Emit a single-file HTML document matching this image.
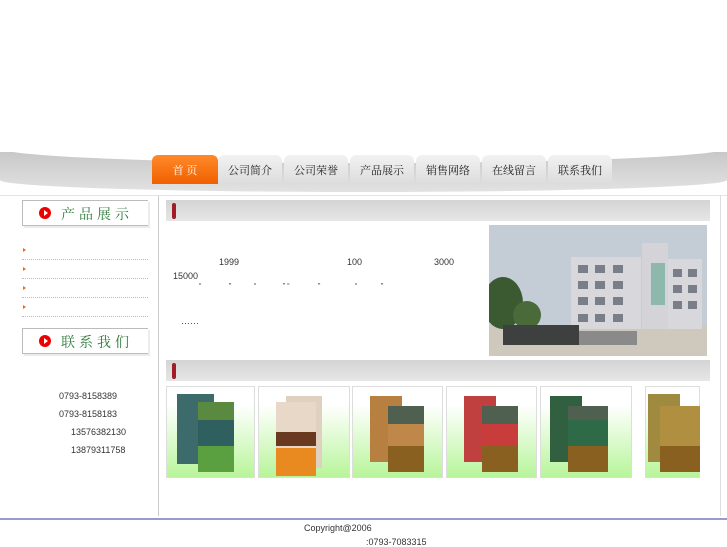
<!DOCTYPE html>
<html><head><meta charset="utf-8"><style>
*{margin:0;padding:0;box-sizing:border-box}
body{width:727px;height:545px;overflow:hidden;background:#fff;font-family:"Liberation Sans","Noto Sans CJK SC",sans-serif;position:relative}
.a{position:absolute}
.tab{position:absolute;top:155px;height:29px;width:64px;background:linear-gradient(#f2f2f2,#dcdcdc);border-radius:6px 6px 0 0;font:11px "Noto Serif CJK SC","Noto Sans CJK SC",serif;color:#222;text-align:center;line-height:31px}
.bar{position:absolute;left:166px;width:544px;height:21px;background:linear-gradient(#d4d4d4,#e6e6e6)}
.bar i{position:absolute;left:6px;top:3px;width:4px;height:16px;background:#a01c2a;border-radius:2px}
.sh{position:absolute;left:22px;width:126px;height:26px;border:1px solid #bbb;border-right:none;background:#fff;box-shadow:2px 2px 0 #ececec}
.sh b{position:absolute;left:16px;top:6px;width:12px;height:12px;border-radius:50%;background:#e00}
.sh b:after{content:"";position:absolute;left:5px;top:3px;border-left:4px solid #fff;border-top:3px solid transparent;border-bottom:3px solid transparent}
.sh span{position:absolute;left:38px;top:3px;font:14px "Noto Serif CJK SC","Noto Sans CJK SC",serif;color:#2d7a3a;letter-spacing:4px}
.dl{position:absolute;left:22px;width:126px;border-top:1px dotted #bbb}
.bu{position:absolute;left:23px;border-left:3px solid #f60;border-top:2px solid transparent;border-bottom:2px solid transparent}
.t{position:absolute;font-size:9px;color:#333}
.cell{position:absolute;top:386px;height:92px;border:1px solid #ddd;background:linear-gradient(#fff 20%,#b8f59a)}
</style></head><body>
<div class="a" style="left:0;top:152px;width:727px;height:40px;background:linear-gradient(#c8c8c8,#e2e2e2);border-radius:0 0 50% 50%/0 0 30% 30%"></div>
<div class="a" style="left:0;top:145px;width:727px;height:18px;background:#fff;border-radius:0 0 60% 60%/0 0 100% 100%"></div>
<div class="tab" style="left:152px;width:66px;background:linear-gradient(#ff8a2a,#f06000);color:#fff">首 页</div>
<div class="tab" style="left:218px">公司简介</div>
<div class="tab" style="left:284px">公司荣誉</div>
<div class="tab" style="left:350px">产品展示</div>
<div class="tab" style="left:416px">销售网络</div>
<div class="tab" style="left:482px">在线留言</div>
<div class="tab" style="left:548px">联系我们</div>
<div class="a" style="left:0;top:195px;width:727px;border-top:1px solid #e4e4e4"></div>
<div class="a" style="left:158px;top:196px;height:320px;border-left:1px solid #ccc"></div>
<div class="a" style="left:720px;top:196px;height:320px;border-left:1px solid #ddd"></div>
<div class="sh" style="top:200px"><b></b><span>产品展示</span></div>
<div class="bu" style="top:248px"></div><div class="dl" style="top:259px"></div>
<div class="bu" style="top:267px"></div><div class="dl" style="top:278px"></div>
<div class="bu" style="top:286px"></div><div class="dl" style="top:297px"></div>
<div class="bu" style="top:305px"></div><div class="dl" style="top:316px"></div>
<div class="sh" style="top:328px"><b></b><span>联系我们</span></div>
<div class="t" style="left:59px;top:391px">0793-8158389</div>
<div class="t" style="left:59px;top:409px">0793-8158183</div>
<div class="t" style="left:71px;top:427px">13576382130</div>
<div class="t" style="left:71px;top:445px">13879311758</div>
<div class="bar" style="top:200px"><i></i></div>
<div class="t" style="left:219px;top:257px">1999</div>
<div class="t" style="left:347px;top:257px">100</div>
<div class="t" style="left:434px;top:257px">3000</div>
<div class="t" style="left:173px;top:271px">15000</div>
<div class="t" style="left:199px;top:283px;font-size:7px">“</div>
<div class="t" style="left:229px;top:283px;font-size:7px">”</div>
<div class="t" style="left:254px;top:283px;font-size:7px">“</div>
<div class="t" style="left:283px;top:283px;font-size:7px">” “</div>
<div class="t" style="left:318px;top:283px;font-size:7px">”</div>
<div class="t" style="left:355px;top:283px;font-size:7px">“</div>
<div class="t" style="left:381px;top:283px;font-size:7px">”</div>
<div class="t" style="left:181px;top:316px">……</div>
<svg class="a" style="left:489px;top:225px" width="218" height="131">
<rect width="218" height="131" fill="#c4ccd6"/>
<rect y="100" width="218" height="31" fill="#cfc9bd"/>
<rect x="82" y="32" width="70" height="72" fill="#d8d8dc"/>
<rect x="153" y="18" width="26" height="86" fill="#d4d4d8"/><rect x="162" y="38" width="14" height="42" fill="#8fb8ac"/>
<rect x="179" y="34" width="34" height="70" fill="#d8d8dc"/>
<g fill="#7a7e88"><rect x="89" y="40" width="10" height="8"/><rect x="106" y="40" width="10" height="8"/><rect x="124" y="40" width="10" height="8"/><rect x="89" y="56" width="10" height="8"/><rect x="106" y="56" width="10" height="8"/><rect x="124" y="56" width="10" height="8"/><rect x="89" y="72" width="10" height="8"/><rect x="106" y="72" width="10" height="8"/><rect x="124" y="72" width="10" height="8"/><rect x="89" y="89" width="10" height="8"/><rect x="106" y="89" width="10" height="8"/><rect x="124" y="89" width="10" height="8"/><rect x="184" y="44" width="9" height="8"/><rect x="199" y="44" width="9" height="8"/><rect x="184" y="60" width="9" height="8"/><rect x="199" y="60" width="9" height="8"/><rect x="184" y="76" width="9" height="8"/><rect x="199" y="76" width="9" height="8"/></g>
<ellipse cx="14" cy="78" rx="20" ry="26" fill="#3c5a32"/><ellipse cx="38" cy="90" rx="14" ry="14" fill="#4a6a3a"/>
<rect x="14" y="100" width="76" height="20" fill="#3e4040"/><rect x="90" y="106" width="58" height="14" fill="#8a8a8a"/>
</svg>
<div class="bar" style="top:360px"><i></i></div>
<div class="cell" style="left:166px;width:89px"></div>
<div class="cell" style="left:258px;width:92px"></div>
<div class="cell" style="left:352px;width:91px"></div>
<div class="cell" style="left:446px;width:91px"></div>
<div class="cell" style="left:540px;width:92px"></div>
<div class="cell" style="left:645px;width:55px"></div>
<svg class="a" style="left:166px;top:386px" width="540" height="92">
<g><rect x="11" y="8" width="37" height="70" fill="#3d6a6a"/><rect x="32" y="16" width="36" height="70" fill="#2f5f5f"/><rect x="32" y="16" width="36" height="18" fill="#5a8a40"/><rect x="32" y="60" width="36" height="26" fill="#5aa040"/></g>
<g><rect x="120" y="10" width="36" height="72" fill="#e0d0c0"/><rect x="110" y="16" width="40" height="74" fill="#e8d8c8"/><rect x="110" y="46" width="40" height="14" fill="#6a3a20"/><rect x="110" y="62" width="40" height="28" fill="#e88a20"/></g>
<g><rect x="204" y="10" width="32" height="66" fill="#b88040"/><rect x="222" y="20" width="36" height="66" fill="#c08848"/><rect x="222" y="20" width="36" height="18" fill="#506050"/><rect x="222" y="60" width="36" height="26" fill="#8a6020"/></g>
<g><rect x="298" y="10" width="32" height="66" fill="#c04040"/><rect x="316" y="20" width="36" height="66" fill="#c83c3c"/><rect x="316" y="20" width="36" height="18" fill="#506050"/><rect x="316" y="60" width="36" height="26" fill="#8a6020"/></g>
<g><rect x="384" y="10" width="32" height="66" fill="#306040"/><rect x="402" y="20" width="40" height="66" fill="#2e6a48"/><rect x="402" y="20" width="40" height="14" fill="#506050"/><rect x="402" y="60" width="40" height="26" fill="#8a6020"/></g>
<g><rect x="482" y="8" width="32" height="68" fill="#a08a40"/><rect x="494" y="20" width="40" height="66" fill="#b09040"/><rect x="494" y="60" width="40" height="26" fill="#8a6020"/></g>
</svg>
<div class="a" style="left:0;top:518px;width:727px;border-top:2px solid #9a9ad0"></div>
<div class="t" style="left:304px;top:523px">Copyright@2006</div>
<div class="t" style="left:366px;top:537px">:0793-7083315</div>
</body></html>
